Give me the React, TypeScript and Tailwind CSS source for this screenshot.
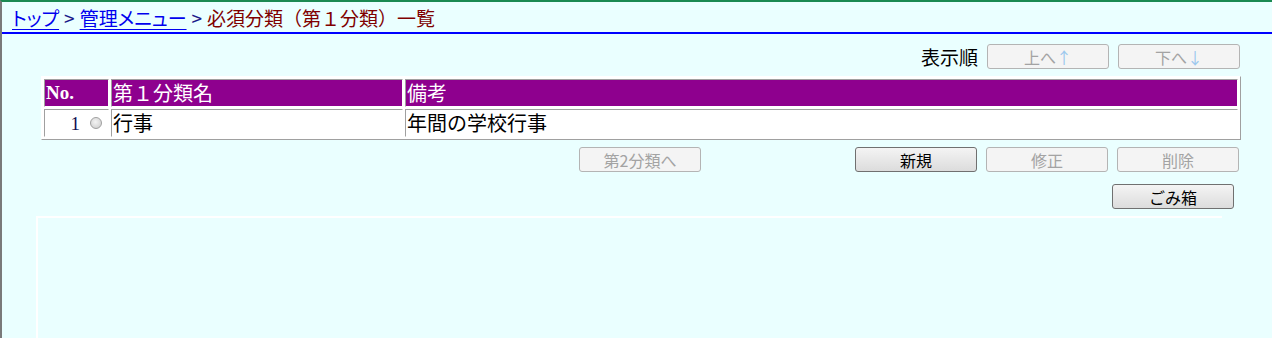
import React from "react";

const jp = "font-['Noto_Sans_CJK_JP','Noto_Sans',sans-serif]";

function Btn({
  children,
  disabled,
  className = "",
}: {
  children: React.ReactNode;
  disabled?: boolean;
  className?: string;
}) {
  return (
    <div
      className={
        "w-[122px] h-[25px] flex items-center justify-center rounded-[3px] text-[16px] leading-none " +
        jp +
        " " +
        (disabled
          ? "border border-[#b4b4b4] bg-[#f4f4f4] text-[#a3a3a3]"
          : "border border-[#707070] bg-[linear-gradient(#f4f4f4,#dcdcdc)] text-black") +
        " " +
        className
      }
    >
      {children}
    </div>
  );
}

const thBase =
  "p-0 pl-[1px] text-left align-middle bg-[#8e008e] text-white border border-t-[#a0a0a0] border-l-[#a0a0a0] border-b-white border-r-white leading-[20px]";
const tdBase =
  "p-0 pl-[1px] align-middle text-black border border-t-[#a0a0a0] border-l-[#a0a0a0] border-b-white border-r-white leading-[20px]";

export default function App() {
  return (
    <div className="w-[1272px] h-[338px] overflow-hidden bg-[#eaffff] border-t-2 border-t-[#1a8a52] border-l-2 border-l-[#7a7a7a]">
      {/* breadcrumb */}
      <div className={"h-[30px] pl-[10px] flex items-center text-[19px] leading-none " + jp}>
        <span className="text-[#0000ee] underline underline-offset-[3px] [font-feature-settings:'palt']">トップ</span>
        <span className="text-[#1a1a8a] mx-[5px]">&gt;</span>
        <span className="text-[#0000ee] underline underline-offset-[3px] [font-feature-settings:'palt']">管理メニュー</span>
        <span className="text-[#1a1a8a] mx-[5px]">&gt;</span>
        <span className="text-[#800000]">必須分類（第１分類）一覧</span>
      </div>
      <div className="h-[2px] bg-[#0000ff]" />

      {/* order toolbar */}
      <div className="mt-[10px] h-[25px] flex justify-end items-center pr-[32px] gap-[9px]">
        <span className={"text-[19px] leading-none text-black " + jp}>表示順</span>
        <Btn disabled>
          上へ<span className="text-[#9cc8ee]">↑</span>
        </Btn>
        <Btn disabled>
          下へ<span className="text-[#9cc8ee]">↓</span>
        </Btn>
      </div>

      {/* table */}
      <table className="mt-[7px] ml-[39px] w-[1200px] bg-white border-separate border-spacing-[2px] border border-t-white border-l-white border-b-[#a0a0a0] border-r-[#a0a0a0] table-fixed">
        <colgroup>
          <col className="w-[65px]" />
          <col className="w-[292px]" />
          <col />
        </colgroup>
        <thead>
          <tr className="h-[28px]">
            <th className={thBase + " font-['Liberation_Serif',serif] font-bold text-[19px]"}>No.</th>
            <th className={thBase + " font-normal text-[20px] " + jp}>第１分類名</th>
            <th className={thBase + " font-normal text-[20px] " + jp}>備考</th>
          </tr>
        </thead>
        <tbody>
          <tr className="h-[28px]">
            <td className={tdBase}>
              <div className="flex items-center justify-end pr-[6px] gap-[10px]">
                <span className="font-['Liberation_Serif',serif] text-[19px] text-[#101050] leading-none">1</span>
                <span className="w-[12px] h-[12px] rounded-full border border-[#a0a0a0] bg-[radial-gradient(circle_at_45%_40%,#f4f4f4,#cacaca)]" />
              </div>
            </td>
            <td className={tdBase + " text-[20px] " + jp}>行事</td>
            <td className={tdBase + " text-[20px] " + jp}>年間の学校行事</td>
          </tr>
        </tbody>
      </table>

      {/* action buttons */}
      <div className="mt-[7px] h-[25px] flex items-center">
        <Btn disabled className="ml-[577px]">第2分類へ</Btn>
        <div className="ml-auto mr-[33px] flex gap-[9px]">
          <Btn>新規</Btn>
          <Btn disabled>修正</Btn>
          <Btn disabled>削除</Btn>
        </div>
      </div>

      <div className="mt-[12px] h-[25px] flex justify-end pr-[38px]">
        <Btn>ごみ箱</Btn>
      </div>

      {/* lower panel */}
      <div className="mt-[7px] ml-[34px] w-[1186px] h-[200px] border-t-2 border-l-2 border-t-white border-l-white" />
    </div>
  );
}
